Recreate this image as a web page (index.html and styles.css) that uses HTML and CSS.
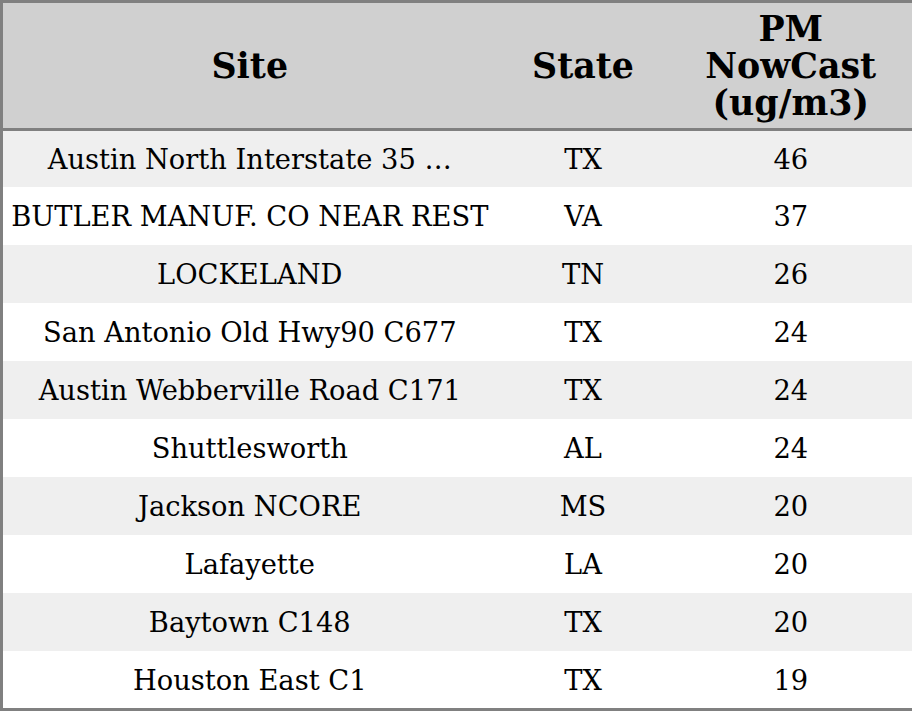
FILE: index.html
```html
<!DOCTYPE html>
<html>
<head>
<meta charset="utf-8">
<link rel="stylesheet" href="styles.css">
</head>
<body>
<table class="grid">
  <colgroup>
    <col class="c-site">
    <col class="c-state">
    <col class="c-pm">
  </colgroup>
  <thead>
    <tr><th>Site</th><th>State</th><th>PM<br>NowCast<br>(ug/m3)</th></tr>
  </thead>
  <tbody>
    <tr><td>Austin North Interstate 35 …</td><td>TX</td><td>46</td></tr>
    <tr><td>BUTLER MANUF. CO NEAR REST</td><td>VA</td><td>37</td></tr>
    <tr><td>LOCKELAND</td><td>TN</td><td>26</td></tr>
    <tr><td>San Antonio Old Hwy90 C677</td><td>TX</td><td>24</td></tr>
    <tr><td>Austin Webberville Road C171</td><td>TX</td><td>24</td></tr>
    <tr><td>Shuttlesworth</td><td>AL</td><td>24</td></tr>
    <tr><td>Jackson NCORE</td><td>MS</td><td>20</td></tr>
    <tr><td>Lafayette</td><td>LA</td><td>20</td></tr>
    <tr><td>Baytown C148</td><td>TX</td><td>20</td></tr>
    <tr><td>Houston East C1</td><td>TX</td><td>19</td></tr>
  </tbody>
</table>
</body>
</html>
```
FILE: styles.css
```css
html, body {
  margin: 0;
  padding: 0;
  background: #ffffff;
}
.grid {
  width: 912px;
  border-collapse: collapse;
  border: 3px solid #808080;
  table-layout: fixed;
  font-family: "DejaVu Serif", serif;
  color: #000;
}
.c-site { width: 495px; }
.c-state { width: 173px; }
.c-pm { width: 244px; }
.grid th {
  background: #d0d0d0;
  font-size: 34.8px;
  font-weight: bold;
  line-height: 37px;
  height: 125px;
  padding: 0;
  text-align: center;
  vertical-align: middle;
  border-bottom: 3px solid #808080;
}
.grid td {
  font-size: 27.3px;
  line-height: 30px;
  height: 56px;
  padding: 2px 0 0;
  text-align: center;
  vertical-align: middle;
  white-space: nowrap;
}
.grid tbody tr:first-child td {
  height: 54px;
}
.grid tbody tr:last-child td {
  height: 55px;
}
.grid tbody tr:nth-child(odd) td {
  background: #efefef;
}
.grid tbody tr:nth-child(even) td {
  background: #ffffff;
}
```
